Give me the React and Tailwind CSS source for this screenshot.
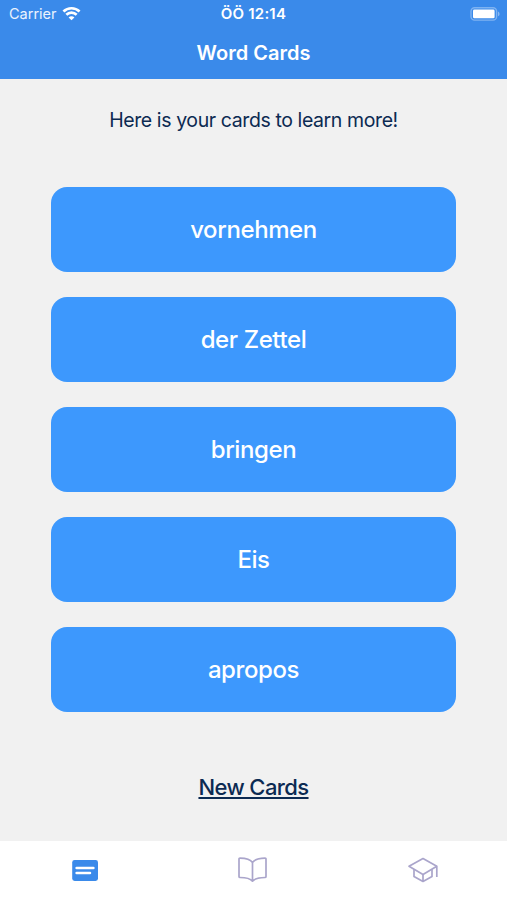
const words = ["vornehmen", "der Zettel", "bringen", "Eis", "apropos"];

const WifiIcon = () => (
  <svg width="19" height="15" viewBox="0 0 20 16" fill="none" stroke="white" strokeWidth="2.8">
    <path d="M1.4 5.9a12.3 12.3 0 0 1 17.2 0" />
    <path d="M4.5 9.3a7.8 7.8 0 0 1 11 0" />
    <path d="M10 15.3l-3.1-3.1a4.3 4.3 0 0 1 6.2 0z" fill="white" stroke="none" />
  </svg>
);

const BatteryIcon = () => (
  <svg width="30" height="14" viewBox="0 0 30 14" fill="none">
    <rect x="1" y="0.7" width="25.6" height="12.4" rx="3.6" stroke="white" strokeOpacity="0.35" strokeWidth="1.4" />
    <rect x="3" y="2.5" width="21.6" height="8.8" rx="1.4" fill="white" />
    <path d="M28 4.5a2.6 2.6 0 0 1 0 4.8z" fill="white" fillOpacity="0.4" />
  </svg>
);

const CardsIcon = () => (
  <svg width="28" height="28" viewBox="0 0 28 28">
    <rect x="1.2" y="4" width="25.8" height="21" rx="2.4" fill="#3a8aea" />
    <path d="M5.600 12h16.800M5.600 17.100h13.400" stroke="white" strokeWidth="2.5" strokeLinecap="round" />
  </svg>
);

const BookIcon = () => (
  <svg className="mr-[3px]" width="29" height="28" viewBox="0 0 29 28" fill="none" stroke="#aaa5cb" strokeWidth="1.7" strokeLinejoin="round">
    <path d="M14.500 6.500C12.300 3.300 8 2.200 2 2.200Q1 2.200 1 3.200V20.500Q1 21.500 2 21.500C8 21.500 12 22.200 14.500 25.200C17 22.200 21 21.500 27 21.500Q28 21.500 28 20.500V3.200Q28 2.200 27 2.200C21 2.200 16.700 3.300 14.500 6.500ZM14.500 6.500V25" />
  </svg>
);

const CapIcon = () => (
  <svg width="30" height="28" viewBox="0 0 30 28" fill="none" stroke="#aaa5cb" strokeWidth="1.7" strokeLinejoin="round">
    <path d="M1 10.300L15 2.500L28.800 10.300L15 18.600ZM28.800 10.300V21" />
    <path d="M6 13.200V20.500L15 25.500L24 20.500V13.200M15 18.600V25.500" />
  </svg>
);

const StatusBar = () => (
  <div className="grid h-[27px] grid-cols-3 items-center pl-[9px] pr-[7px] text-[15px] text-white">
    <div className="flex items-center gap-[5px]">
      <span className="pt-px text-[14.5px] text-white/90">Carrier</span>
      <WifiIcon />
    </div>
    <span className="pr-[2px] pt-px text-center text-[15px] font-semibold tracking-[0.2px]">ÖÖ 12:14</span>
    <div className="flex justify-end">
      <BatteryIcon />
    </div>
  </div>
);

const App = () => {
  return (
    <div className="flex h-[900px] w-[507px] flex-col bg-[#f1f1f1] font-['Inter',sans-serif]">
      <header className="h-[79px] bg-[#3a8aea]">
        <StatusBar />
        <h1 className="pt-[11px] text-center text-[20px] font-semibold leading-[30px] text-white">Word Cards</h1>
      </header>

      <main className="flex flex-1 flex-col items-center text-[#0c2a52]">
        <p className="mt-[26px] text-[19.5px] leading-[30px] tracking-[-0.4px]">Here is your cards to learn more!</p>
        <div className="mt-[52px] flex w-[405px] flex-col gap-[25px]">
          {words.map((word) => (
            <button
              key={word}
              className="h-[85px] rounded-[16px] bg-[#3d98fd] text-[24px] font-[450] tracking-[-0.4px] text-white"
            >
              {word}
            </button>
          ))}
        </div>
        <button className="mt-[60px] text-[22px] font-[450] leading-[30px] tracking-[-0.6px] underline decoration-[1.5px] underline-offset-[2px]">
          New Cards
        </button>
      </main>

      <nav className="grid h-[59px] grid-cols-3 justify-items-center bg-white pt-[15px]">
        <CardsIcon />
        <BookIcon />
        <CapIcon />
      </nav>
    </div>
  );
};

export default App;
